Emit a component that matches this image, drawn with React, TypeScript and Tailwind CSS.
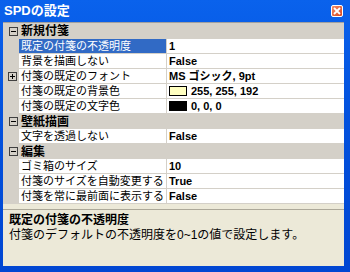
import React from 'react';

const JP = '[font-family:"Liberation_Sans","Noto_Sans_CJK_JP",sans-serif]';

type Prop = { name: string; value: string; swatch?: string; expand?: boolean; selected?: boolean };
type Category = { title: string; props: Prop[] };

const CATEGORIES: Category[] = [
  {
    title: '新規付箋',
    props: [
      { name: '既定の付箋の不透明度', value: '1', selected: true },
      { name: '背景を描画しない', value: 'False' },
      { name: '付箋の既定のフォント', value: 'MS ゴシック, 9pt', expand: true },
      { name: '付箋の既定の背景色', value: '255, 255, 192', swatch: '#ffffc0' },
      { name: '付箋の既定の文字色', value: '0, 0, 0', swatch: '#000000' },
    ],
  },
  {
    title: '壁紙描画',
    props: [{ name: '文字を透過しない', value: 'False' }],
  },
  {
    title: '編集',
    props: [
      { name: 'ゴミ箱のサイズ', value: '10' },
      { name: '付箋のサイズを自動変更する', value: 'True' },
      { name: '付箋を常に最前面に表示する', value: 'False' },
    ],
  },
];

const Box: React.FC<{ plus?: boolean }> = ({ plus }) => (
  <svg width="9" height="9" viewBox="0 0 9 9" className="block">
    <rect x="0.5" y="0.5" width="8" height="8" fill="none" stroke="#404040" />
    <line x1="2" y1="4.5" x2="7" y2="4.5" stroke="#000" />
    {plus && <line x1="4.5" y1="2" x2="4.5" y2="7" stroke="#000" />}
  </svg>
);

const CloseButton: React.FC = () => (
  <div className="flex h-[12px] w-[12px] items-center justify-center rounded-[2px] border border-white bg-[linear-gradient(135deg,#f08a66,#d8471f)]">
    <svg width="8" height="8" viewBox="0 0 8 8">
      <path d="M1 1 L7 7 M7 1 L1 7" stroke="#fff" strokeWidth="1.8" />
    </svg>
  </div>
);

const PropRow: React.FC<{ p: Prop }> = ({ p }) => (
  <div className="flex h-[15px]">
    <div className="flex w-[16px] items-center justify-center pl-[2px]">{p.expand && <Box plus />}</div>
    <div
      className={`flex h-[14px] w-[147px] items-center overflow-hidden whitespace-nowrap pl-[2px] text-[11px] leading-[14px] ${
        p.selected ? 'bg-[#316ac5] text-white' : 'bg-white text-black'
      }`}
    >
      {p.name}
    </div>
    <div className="w-px" />
    <div className="flex h-[14px] flex-1 items-center gap-[4px] bg-white pl-[2px] text-[11px] font-bold leading-[14px] text-black">
      {p.swatch && (
        <span className="h-[10px] w-[18px] border border-black" style={{ backgroundColor: p.swatch }} />
      )}
      {p.value}
    </div>
  </div>
);

const App: React.FC = () => {
  return (
    <div className={`flex h-[272px] w-[350px] flex-col bg-[linear-gradient(180deg,#0a62ec,#0352de_40%,#0046d2)] ${JP}`}>
      <div className="flex h-[22px] items-center justify-between pl-[4px] pr-[7px]">
        <span className="text-[13px] font-bold text-white">SPDの設定</span>
        <CloseButton />
      </div>
      <div className="mb-[6px] ml-[3px] mr-[6px] flex flex-1 flex-col bg-[#ece9d8]">
        <div className="border-t border-[#a0a0a0] bg-[#d4d0c8]">
          {CATEGORIES.map((c, i) => (
            <div key={c.title}>
              <div className={`flex items-center ${i === 0 ? 'h-[16px]' : 'h-[15px]'}`}>
                <div className="flex w-[18px] items-center justify-center pl-[2px]">
                  <Box />
                </div>
                <span className="text-[12px] font-bold leading-[14px] text-black">{c.title}</span>
              </div>
              {c.props.map((p) => (
                <PropRow key={p.name} p={p} />
              ))}
            </div>
          ))}
        </div>
        <div className="mt-[5px] flex-1 border-t border-[#aca899] px-[6px] pt-[2px] text-black">
          <div className="text-[12px] font-bold leading-[16px]">既定の付箋の不透明度</div>
          <div className="text-[12px] leading-[14px]">付箋のデフォルトの不透明度を0~1の値で設定します。</div>
        </div>
      </div>
    </div>
  );
};

export default App;
